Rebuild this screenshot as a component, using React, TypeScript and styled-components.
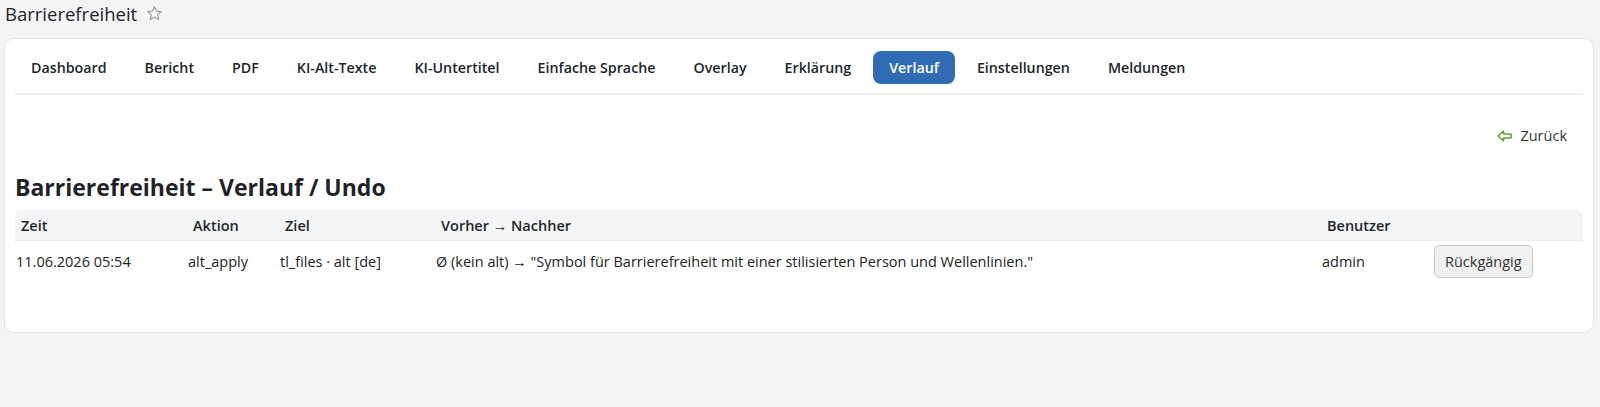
import React from "react";
import styled, { createGlobalStyle } from "styled-components";

const Global = createGlobalStyle`
  html, body { margin: 0; padding: 0; }
  body {
    background: #f4f4f6;
    font-family: "Open Sans", "Noto Sans", "Liberation Sans", sans-serif;
    color: #212529;
  }
`;

const Page = styled.div`
  display: flex;
  flex-direction: column;
  padding: 0 6px 0 4px;
`;

const TitleBar = styled.div`
  display: flex;
  align-items: center;
  gap: 9px;
  height: 26px;
  padding: 0 1px;
  margin-bottom: 12px;
`;

const Title = styled.h1`
  margin: 0;
  font-size: 18.5px;
  font-weight: 400;
  color: #1f2328;
`;

const Card = styled.div`
  background: #fff;
  border: 1px solid #e1e3e7;
  border-radius: 10px;
  padding: 12px 10px 51px 10px;
`;

const Nav = styled.nav`
  display: flex;
  gap: 6px;
  padding-bottom: 9px;
  border-bottom: 2px solid #eceef1;
`;

const Tab = styled.a<{ $active?: boolean }>`
  display: block;
  height: 33px;
  line-height: 33px;
  padding: 0 16px;
  border-radius: 8px;
  font-size: 14.25px;
  font-weight: 600;
  color: ${(p) => (p.$active ? "#fff" : "#212529")};
  background: ${(p) => (p.$active ? "#2f6cb3" : "transparent")};
  cursor: pointer;
`;

const BackRow = styled.div`
  display: flex;
  justify-content: flex-end;
  padding: 31px 16px 0 0;
`;

const BackLink = styled.a`
  display: flex;
  align-items: center;
  gap: 8px;
  font-size: 14.5px;
  color: #333;
  cursor: pointer;
`;

const Heading = styled.h2`
  margin: 26px 0 7px;
  font-size: 23px;
  font-weight: 700;
  color: #1f2328;
`;

const Table = styled.table`
  width: 100%;
  border-collapse: separate;
  border-spacing: 0;
  table-layout: fixed;
  font-size: 14.5px;
`;

const Th = styled.th`
  text-align: left;
  font-weight: 600;
  height: 30px;
  padding: 0 0 0 6px;
  background: #f4f5f7;
  border-bottom: 1px solid #e9ebee;
  &:first-child { border-top-left-radius: 6px; }
  &:last-child { border-top-right-radius: 6px; }
`;

const Td = styled.td`
  height: 40px;
  padding: 0 0 0 1px;
  vertical-align: middle;
  color: #222;
`;

const UndoButton = styled.button`
  font-family: inherit;
  font-size: 14.5px;
  color: #333;
  height: 33px;
  padding: 0 10px;
  background: #f0f0f0;
  border: 1px solid #c9c9c9;
  border-radius: 5px;
  cursor: pointer;
`;

const tabs = [
  "Dashboard",
  "Bericht",
  "PDF",
  "KI-Alt-Texte",
  "KI-Untertitel",
  "Einfache Sprache",
  "Overlay",
  "Erklärung",
  "Verlauf",
  "Einstellungen",
  "Meldungen",
];

const Star = () => (
  <svg width="17" height="17" viewBox="0 0 24 24" fill="none" stroke="#9a9a9a" strokeWidth="1.6" strokeLinejoin="round">
    <polygon points="12,2.5 14.9,8.6 21.5,9.3 16.5,13.8 17.9,20.4 12,17 6.1,20.4 7.5,13.8 2.5,9.3 9.1,8.6" />
  </svg>
);

const BackArrow = () => (
  <svg width="15" height="12" viewBox="0 0 15 12" fill="none" stroke="#6a9e36" strokeWidth="1.6" strokeLinejoin="round">
    <polygon points="1,6 6.5,1.2 6.5,4 14,4 14,8 6.5,8 6.5,10.8" />
  </svg>
);

export default function App() {
  return (
    <>
      <Global />
      <Page>
        <TitleBar>
          <Title>Barrierefreiheit</Title>
          <Star />
        </TitleBar>
        <Card>
          <Nav>
            {tabs.map((t) => (
              <Tab key={t} $active={t === "Verlauf"}>
                {t}
              </Tab>
            ))}
          </Nav>
          <BackRow>
            <BackLink>
              <BackArrow />
              Zurück
            </BackLink>
          </BackRow>
          <Heading>Barrierefreiheit – Verlauf / Undo</Heading>
          <Table>
            <colgroup>
              <col style={{ width: 172 }} />
              <col style={{ width: 92 }} />
              <col style={{ width: 156 }} />
              <col style={{ width: 886 }} />
              <col style={{ width: 112 }} />
              <col style={{ width: 150 }} />
            </colgroup>
            <thead>
              <tr>
                <Th>Zeit</Th>
                <Th>Aktion</Th>
                <Th>Ziel</Th>
                <Th>Vorher → Nachher</Th>
                <Th>Benutzer</Th>
                <Th></Th>
              </tr>
            </thead>
            <tbody>
              <tr>
                <Td>11.06.2026 05:54</Td>
                <Td>alt_apply</Td>
                <Td>tl_files · alt [de]</Td>
                <Td>
                  Ø (kein alt) → "Symbol für Barrierefreiheit mit einer stilisierten Person und Wellenlinien."
                </Td>
                <Td>admin</Td>
                <Td>
                  <UndoButton>Rückgängig</UndoButton>
                </Td>
              </tr>
            </tbody>
          </Table>
        </Card>
      </Page>
    </>
  );
}
